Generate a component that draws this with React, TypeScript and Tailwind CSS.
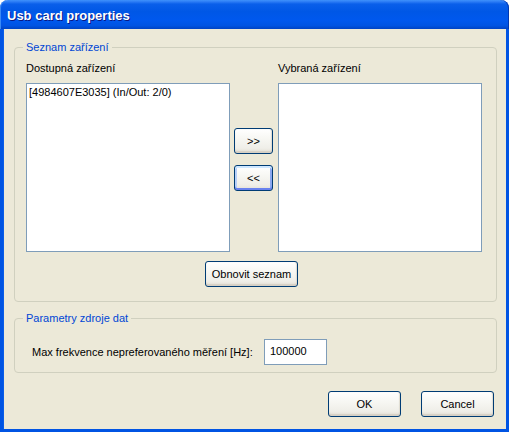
import React from "react";

const font = { fontFamily: '"Liberation Sans", Arial, sans-serif' };

function XPButton({
  children,
  className = "",
  focused = false,
}: {
  children: React.ReactNode;
  className?: string;
  focused?: boolean;
}) {
  return (
    <button
      className={
        "flex items-center justify-center rounded-[3px] border border-[#003c74] text-[11px] leading-[13px] text-black bg-[linear-gradient(180deg,#ffffff_0%,#f7f7f3_40%,#efeee8_80%,#e2ded3_100%)] " +
        (focused
          ? "shadow-[inset_0_2px_0_#cee7ff,inset_0_-2px_0_#6982ee,inset_2px_0_0_#b8d0f8,inset_-2px_0_0_#8aa8f0] "
          : "shadow-[inset_0_-2px_1px_#d6d0c5,inset_-1px_0_1px_#e2ddd2] ") +
        className
      }
      style={font}
    >
      {children}
    </button>
  );
}

function Group({
  label,
  className = "",
  children,
}: {
  label: string;
  className?: string;
  children: React.ReactNode;
}) {
  return (
    <div className={"relative rounded-[4px] border border-[#d0d0bf] " + className}>
      <span className="absolute left-[8px] top-[-7px] bg-[#ece9d8] px-[3px] text-[11px] leading-[13px] text-[#0046d5]">
        {label}
      </span>
      {children}
    </div>
  );
}

export default function App() {
  return (
    <div className="w-[509px] h-[432px] flex flex-col bg-white" style={font}>
      {/* Title bar */}
      <div className="h-[29px] shrink-0 rounded-t-[8px] flex items-center pl-[7px] pt-[1px] bg-[linear-gradient(180deg,#3f92fb_0%,#2c7cf5_6%,#0a5fea_14%,#0057e6_40%,#0058ee_70%,#0054e3_88%,#0043c4_100%)] shadow-[inset_1px_0_0_#3a8af5,inset_-1px_0_0_#0037b0]">
        <span className="text-[13px] font-bold text-white leading-none [text-shadow:1px_1px_0_#0a1883]">
          Usb card properties
        </span>
      </div>
      {/* Body */}
      <div className="flex-1 flex flex-col border-x-[3px] border-b-[3px] border-[#0054e3] bg-[#ece9d8] pl-[11px] pr-[9px] shadow-[inset_1px_0_0_#0a5de8]">
        <Group label="Seznam zařízení" className="mt-[18px] h-[255px]">
          <div className="flex flex-col pl-[11px] pt-[14px]">
            <div className="flex">
              <div className="flex flex-col w-[204px]">
                <div className="text-[11px] leading-[13px] text-black">Dostupná zařízení</div>
                <div className="mt-[8px] h-[169px] border border-[#7f9db9] bg-white px-[2px] pt-[2px] text-[11px] leading-[13px] text-black">
                  [4984607E3035] (In/Out: 2/0)
                </div>
              </div>
              <div className="flex flex-col ml-[4px] pt-[66px] gap-[11px]">
                <XPButton className="w-[39px] h-[26px]">&gt;&gt;</XPButton>
                <XPButton className="w-[39px] h-[26px]" focused>
                  &lt;&lt;
                </XPButton>
              </div>
              <div className="flex flex-col w-[204px] ml-[5px]">
                <div className="text-[11px] leading-[13px] text-black">Vybraná zařízení</div>
                <div className="mt-[8px] h-[169px] border border-[#7f9db9] bg-white" />
              </div>
            </div>
            <XPButton className="mt-[9px] ml-[179px] w-[93px] h-[26px]">Obnovit seznam</XPButton>
          </div>
        </Group>
        <Group label="Parametry zdroje dat" className="mt-[16px] h-[55px]">
          <div className="flex items-center pl-[17px] pt-[20px]">
            <div className="w-[232px] text-[11px] leading-[13px] text-black">
              Max frekvence nepreferovaného měření [Hz]:
            </div>
            <div className="w-[63px] h-[26px] border border-[#7f9db9] bg-white px-[5px] pt-[5px] text-[11px] leading-[13px] text-black">
              100000
            </div>
          </div>
        </Group>
        <div className="mt-[18px] flex justify-end gap-[20px] pr-[3px]">
          <XPButton className="w-[73px] h-[26px]">OK</XPButton>
          <XPButton className="w-[73px] h-[26px]">Cancel</XPButton>
        </div>
      </div>
    </div>
  );
}
